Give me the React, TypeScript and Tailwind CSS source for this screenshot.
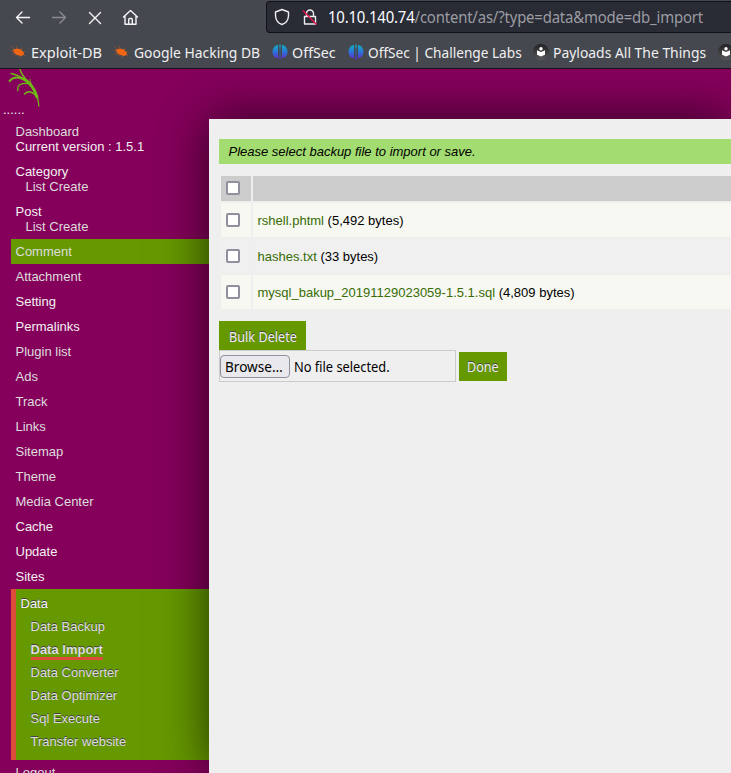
import React from "react";

const ui = "font-['Noto_Sans',sans-serif]";
const narrow = "inline-block origin-left whitespace-nowrap";

function BugIcon() {
  return (
    <svg width="15" height="14" viewBox="0 0 15 14" className="shrink-0">
      <path d="M2 4.500 L6 3.500 L10 4.500 L12.800 7.500 L13 10 L9.500 11 L5 9.500 L2.500 7Z" fill="#f06514" />
      <path d="M0.500 1.500 L3 4.500 M6 3.500 L5 .5 M0 5.500H3 M1 9.500L4 8 M4 11.500L6 9 M8.500 12.500L8.500 10 M10 5L11 2.500 M12 7L14.500 6.500 M12 9L14 11" stroke="#b55a29" strokeWidth=".6" fill="none" />
    </svg>
  );
}

function OffSecIcon() {
  return (
    <svg width="16" height="16" viewBox="0 0 16 16" className="shrink-0">
      <defs>
        <linearGradient id="offsec" x1="0" y1="0" x2="0" y2="1">
          <stop offset="0" stopColor="#0eb1c4" />
          <stop offset=".5" stopColor="#2d73d6" />
          <stop offset="1" stopColor="#6327cf" />
        </linearGradient>
      </defs>
      <path d="M6 1V14.200C2.500 14 .5 11 .5 7.800S2.400 1.600 6 1ZM10 1V14.200C13.500 14 15.500 11 15.500 7.800S13.600 1.600 10 1ZM7.300 .6H8.700V3L8.300 5V11L8.700 13V15.500H7.300V13L7.700 11V5L7.300 3Z" fill="url(#offsec)" />
    </svg>
  );
}

function BookIcon() {
  return (
    <svg width="16" height="16" viewBox="0 0 16 16" className="shrink-0">
      <defs>
        <linearGradient id="book" x1="0" y1="0" x2="0" y2="1">
          <stop offset="0" stopColor="#222" />
          <stop offset="1" stopColor="#575757" />
        </linearGradient>
      </defs>
      <circle cx="8" cy="8" r="8" fill="url(#book)" />
      <circle cx="8" cy="4.800" r="1.700" fill="#fff" />
      <path d="M4 6.300 8 8 12 6.300V10.700L8 12.500 4 10.700Z" fill="#fff" />
    </svg>
  );
}

function Bookmark({ icon, label, className, scale }: { icon: React.ReactNode; label: string; className: string; scale: string }) {
  return (
    <div className={`flex shrink-0 items-center whitespace-nowrap ${className}`}>
      {icon}
      <span className={`${narrow} ${scale}`}>{label}</span>
    </div>
  );
}

function Toolbar() {
  return (
    <header className={`${ui} h-[69px] overflow-hidden border-b border-[#141519] bg-[#45484f] text-[#f0f0f1]`}>
      <div className="flex h-[34px]">
        <svg width="150" height="34" viewBox="0 0 150 34" fill="none" stroke="#f4f4f5" strokeWidth="1.4" strokeLinecap="round" strokeLinejoin="round" className="shrink-0">
          <path d="M29.500 17.500H16.500M22 12 16.500 17.500 22 23" />
          <path d="M52.500 17.500H65.500M60 12 65.500 17.500 60 23" stroke="#8a8c91" />
          <path d="M89.500 12.500 100.500 23.500M100.500 12.500 89.500 23.500" />
          <path d="M123.500 17 130.500 10.500 137.500 17M125 16V24.300H136V16M128.700 24V19.500Q128.700 18.500 129.700 18.500H131.300Q132.300 18.500 132.300 19.500V24" />
        </svg>
        <div className="ml-[116px] mt-px flex h-8 flex-1 items-center rounded-l-[4px] border border-r-0 border-[#111217] bg-[#292b35] pl-[7px]">
          <svg width="46" height="20" viewBox="0 0 46 20" fill="none" stroke="#eeeef0" strokeWidth="1.4" strokeLinejoin="round" className="shrink-0">
            <path d="M8 2.500 14.500 5V9Q14 15.500 8 17.500 2 15.500 1.500 9V5Z" />
            <path d="M32.500 9.500V6.500A3.500 3.500 0 0 1 39.500 6.500V9.500M30.500 9.500H41.500V17H30.500Z" />
            <path d="M29 3.500 42.500 17.500" stroke="#f0134d" />
          </svg>
          <span className="ml-[8px] inline-block w-[380px] origin-left scale-x-[.932] whitespace-nowrap text-[16px] leading-5 tracking-[-0.2px] text-[#9b9ca2]">
            <span className="text-[#fbfbfe]">10.10.140.74</span>/content/as/?type=data&amp;mode=db_import
          </span>
        </div>
      </div>
      <nav className="flex h-[34px] items-center pl-[11px] pt-[2px] text-[15px] leading-5">
        <Bookmark icon={<BugIcon />} label="Exploit-DB" className="w-[103px] gap-[5px]" scale="scale-x-[.97]" />
        <Bookmark icon={<BugIcon />} label="Google Hacking DB" className="w-[158px] gap-[5px]" scale="scale-x-[.926]" />
        <Bookmark icon={<OffSecIcon />} label="OffSec" className="w-[76px] gap-1" scale="scale-x-[.95]" />
        <Bookmark icon={<OffSecIcon />} label="OffSec | Challenge Labs" className="w-[185px] gap-1" scale="scale-x-[.91]" />
        <Bookmark icon={<BookIcon />} label="Payloads All The Things" className="w-[185px] gap-1" scale="scale-x-[.927]" />
        <BookIcon />
      </nav>
    </header>
  );
}

function Plant() {
  return (
    <svg width="40" height="40" viewBox="0 0 40 40" className="ml-1">
      <g fill="none" stroke="#6fb916" strokeLinecap="round">
        <path d="M16 .8C18 6 20 8.500 24 13" strokeWidth="1.500" />
        <path d="M20 9C29 15 34 23 34.800 37" strokeWidth="1.300" />
        <path d="M20 9.500C27 15 31 21 33 28" strokeWidth="2.800" />
        <path d="M7 4.500C12 5.500 17 7 22 12" strokeWidth="1.300" />
        <path d="M5.500 12C9 8 15 7 23 12.500" strokeWidth="1.900" />
        <path d="M13.800 21.500C13 16 17 13.500 25 14.500" strokeWidth="1.300" />
        <path d="M26 10.500C26 13 28 17 30 21" strokeWidth="1" />
        <path d="M20.500 25C24 21.500 29 22 33 28" strokeWidth="1.600" />
      </g>
    </svg>
  );
}

const entries = ["Attachment", "Setting", "Permalinks", "Plugin list", "Ads", "Track", "Links", "Sitemap", "Theme", "Media Center", "Cache", "Update", "Sites"];
const bright = ["Setting", "Permalinks", "Cache", "Update", "Sites"];
const dataEntries = ["Data Backup", "Data Import", "Data Converter", "Data Optimizer", "Sql Execute", "Transfer website"];

function Sidebar() {
  return (
    <aside className="w-[209px] shrink-0 text-[#ddd]">
      <div className="h-[50px]">
        <Plant />
        <p className="-mt-[4px] pl-[3px] leading-[10px] text-[#eee]">......</p>
      </div>
      <ul className="ml-[11px] leading-[15px]">
        <li className="py-[5px] pl-[4.500px]">
          Dashboard
          <p className="text-[#f2f2f2]">Current version : 1.5.1</p>
        </li>
        {["Category", "Post"].map((name) => (
          <li key={name} className="py-[5px] pl-[4.500px]">
            <p className="text-[#f2f2f2]">{name}</p>
            <p className="pl-[10px]">List Create</p>
          </li>
        ))}
        <li className="bg-[#690] py-[5px] pl-[4.500px]">Comment</li>
        {entries.map((name) => (
          <li key={name} className={`py-[5px] pl-[4.500px] ${bright.includes(name) ? "text-[#f2f2f2]" : ""}`}>{name}</li>
        ))}
        <li className="h-[171px] border-l-[5px] border-[#dd4b39] bg-[#690] pl-[4.500px] pt-[7px] [text-shadow:0_-1px_0_#444]">
          <p className="text-[#f5f5f5]">Data</p>
          <ul className="pl-[10px] pt-1">
            {dataEntries.map((name) => (
              <li key={name} className="flex h-[23px] items-center">
                {name === "Data Import" ? (
                  <span className="h-[21px] border-b-[3px] border-[#dd4b39] pt-[3px] font-bold">{name}</span>
                ) : name}
              </li>
            ))}
          </ul>
        </li>
        <li className="py-[5px] pl-[4.500px]">Logout</li>
      </ul>
    </aside>
  );
}

function Check() {
  return <span className="block h-[14px] w-[14px] rounded-[2px] border-2 border-[#8f8f9d] bg-white" />;
}

const files = [
  { name: "rshell.phtml", size: "(5,492 bytes)", row: "h-[34px] bg-[#f7f8f1]" },
  { name: "hashes.txt", size: "(33 bytes)", row: "h-[34px] bg-[#f0f0f0]" },
  { name: "mysql_bakup_20191129023059-1.5.1.sql", size: "(4,809 bytes)", row: "h-[34px] bg-[#f7f8f1]" },
];

function Content() {
  return (
    <main className="mt-[50px] h-[654px] flex-1 bg-[#efefef] pl-[10px] pt-5 text-black shadow-[0_0_47px_rgba(0,0,0,0.67)]">
      <p className="h-[25px] bg-[#a3dc70] pl-[9.500px] italic leading-[25px]">Please select backup file to import or save.</p>
      <div className="mt-3 flex flex-col gap-[2px] pl-[2px]">
        <div className="flex h-[25px] gap-[2px]">
          <div className="w-[30px] bg-[#ccc] pl-[5px] pt-[5px]"><Check /></div>
          <div className="flex-1 bg-[#ccc]" />
        </div>
        {files.map((f) => (
          <div key={f.name} className="flex gap-[2px]">
            <div className={`flex w-[30px] items-center pl-[5px] ${f.row}`}><Check /></div>
            <div className={`flex flex-1 items-center pl-[4.500px] ${f.row}`}>
              <span><span className="text-[#386c06]">{f.name}</span> {f.size}</span>
            </div>
          </div>
        ))}
      </div>
      <div className={`${ui} text-[14px]`}>
        <button className="mt-3 flex h-[29px] w-[87px] items-center bg-[#690] pl-[10px] pt-px text-[#eee] [text-shadow:0_-1px_0_#444]">
          <span className={`${narrow} scale-x-[.905]`}>Bulk Delete</span>
        </button>
        <div className="flex items-start gap-[3px]">
          <div className="flex h-8 w-[237px] items-center border border-[#ccc]">
            <span className="flex h-[23px] w-[70px] shrink-0 items-center rounded-[4px] border border-[#8f8f9d] bg-[#e9e9ed] pl-[4px] pt-px">
              <span className={`${narrow} scale-x-[.97]`}>Browse…</span>
            </span>
            <span className={`${narrow} ml-[4px] scale-x-[.915] pt-px`}>No file selected.</span>
          </div>
          <button className="mt-[2px] flex h-[29px] w-12 items-center bg-[#690] pl-2 text-[#eee] [text-shadow:0_-1px_0_#444]">
            <span className={`${narrow} scale-x-[.9]`}>Done</span>
          </button>
        </div>
      </div>
    </main>
  );
}

export default function App() {
  return (
    <div className="h-[773px] w-[731px] overflow-hidden bg-[#85005b] font-['Liberation_Sans',Arial,sans-serif] text-[13px] leading-[15px]">
      <Toolbar />
      <div className="flex h-[704px] overflow-hidden">
        <Sidebar />
        <Content />
      </div>
    </div>
  );
}
